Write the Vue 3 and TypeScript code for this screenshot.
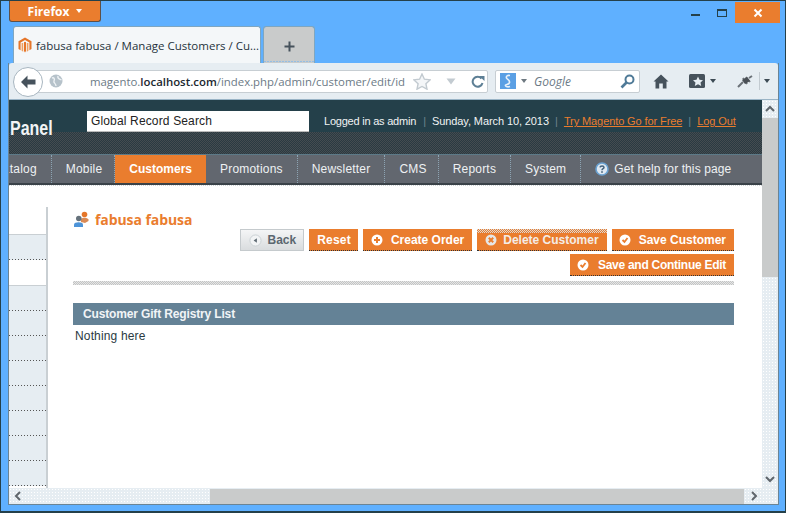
<script setup lang="ts">
const menu = [
  { label: 'Catalog', cls: 'first' },
  { label: 'Mobile', cls: 'tight' },
  { label: 'Customers', cls: 'active' },
  { label: 'Promotions', cls: '' },
  { label: 'Newsletter', cls: '' },
  { label: 'CMS', cls: 'cms' },
  { label: 'Reports', cls: '' },
  { label: 'System', cls: '' },
]
const sideRows = [1, 2, 3, 4, 5, 6, 7, 8]
</script>

<template>
  <div class="window">
    <div class="titlebar">
      <button class="ff-btn">Firefox<i class="ff-caret"></i></button>
      <div class="controls">
        <span class="min"></span>
        <span class="max"></span>
        <span class="close">
          <svg width="10" height="10" viewBox="0 0 10 10"><path d="M1.5 1.5L8.5 8.5M8.5 1.5L1.5 8.5" stroke="#fff" stroke-width="2" /></svg>
        </span>
      </div>
    </div>
    <div class="tabs">
      <div class="tab">
        <svg class="tab-icon" width="14" height="16" viewBox="0 0 14 16"><path d="M7 0.5L13.5 4.2V12L11.4 13.2V5.4L7 2.9L2.6 5.4V13.2L0.5 12V4.2Z" fill="#e5762a" /><path d="M6 5.2L7 4.7L8 5.2V14L7 15.5L6 14Z" fill="#e5762a" /><path d="M3.6 6V13.8L5.2 14.8V6ZM8.8 6V14.8L10.4 13.8V6Z" fill="#f0a060" /></svg>
        <span>fabusa fabusa / Manage Customers / Cu...</span>
      </div>
      <div class="tab-new">
        <svg width="11" height="11" viewBox="0 0 11 11"><path d="M5.5 0.5V10.5M0.5 5.5H10.5" stroke="#46525c" stroke-width="2" /></svg>
      </div>
    </div>
    <div class="frame">
      <div class="nav">
        <div class="back">
          <svg width="16" height="14" viewBox="0 0 16 14"><path d="M7.5 0.5L1 7L7.5 13.5V9.5H15.5V4.5H7.5Z" fill="#46525c" /></svg>
        </div>
        <div class="urlbar">
          <svg class="globe" width="14" height="14" viewBox="0 0 14 14"><circle cx="7" cy="7" r="6.5" fill="#b6c2ca" /><path d="M3 4C5 3 6 5 5 7S7 9 7 12M9 2C8 5 11 5 12.5 6" stroke="#eef2f5" stroke-width="1.4" fill="none" /></svg>
          <span class="url">magento.<b>localhost.com</b>/index.php/admin/customer/edit/id</span>
          <svg class="star" width="18" height="17" viewBox="0 0 18 17"><path d="M9 1L11.4 6.2L17 6.9L12.9 10.7L14 16.2L9 13.5L4 16.2L5.1 10.7L1 6.9L6.6 6.2Z" fill="#f4f6f8" stroke="#c2cad0" stroke-width="1.4" /></svg>
          <svg class="drop" width="10" height="7" viewBox="0 0 10 7"><path d="M0.5 0.5H9.5L5 6.5Z" fill="#c3cbd1" /></svg>
          <svg class="reload" width="14" height="13" viewBox="0 0 14 13"><path d="M10.5 3.5A5 5 0 1 0 11.5 8" stroke="#5d7f95" stroke-width="2" fill="none" /><path d="M8 1H13.5V6Z" fill="#5d7f95" /></svg>
        </div>
        <div class="searchbar">
          <span class="g-box"><svg width="16" height="16" viewBox="0 0 16 16"><path d="M10 2.5C7 2 6 3.5 6.5 5S10 7 9.5 9.5 6 11 5.5 12 7 14.5 10 13.5" stroke="#e8f1fa" stroke-width="1.6" fill="none" /></svg></span>
          <i class="g-caret"></i>
          <span class="g-text">Google</span>
          <svg width="15" height="15" viewBox="0 0 15 15"><circle cx="9.5" cy="5.5" r="4" fill="none" stroke="#4f7a97" stroke-width="2" /><path d="M6.5 8.5L1.5 13.5" stroke="#4f7a97" stroke-width="2.6" /></svg>
        </div>
        <svg class="home" width="16" height="15" viewBox="0 0 16 15"><path d="M8 0.5L15.5 7.5H13.5V14.5H9.8V9.5H6.2V14.5H2.5V7.5H0.5Z" fill="#46525c" /></svg>
        <div class="bookmark">
          <svg width="16" height="14" viewBox="0 0 16 14"><rect width="16" height="14" rx="1.5" fill="#46525c" /><path d="M9 2.5L10.5 5.8L14 6.2L11.5 8.6L12.2 12L9 10.3L5.8 12L6.5 8.6L4 6.2L7.5 5.8Z" fill="#e6edf2" /></svg>
          <i class="tool-caret"></i>
        </div>
        <svg class="plug" width="16" height="13" viewBox="0 0 16 13"><path d="M1 12L6 7M6 3L10 9M9 2L13 7M12 3L15 1" stroke="#6b7278" stroke-width="2" fill="none" /><path d="M5 5L10 2L13 6L8 9Z" fill="#4a5056" /></svg>
        <span class="tool-sep"></span>
        <i class="tool-caret"></i>
      </div>

      <div class="viewport">
        <div class="page">
          <header class="top">
            <div class="logo"><span>Panel</span></div>
            <div class="global-search">Global Record Search</div>
            <div class="links">
              <span class="who">Logged in as admin</span><i>|</i>
              <span>Sunday, March 10, 2013</span><i>|</i>
              <a>Try Magento Go for Free</a><i>|</i>
              <a>Log Out</a>
            </div>
          </header>
          <nav class="menu">
            <div v-for="item in menu" :key="item.label" class="menu-item" :class="item.cls">{{ item.label }}</div>
            <div class="menu-help">
              <svg width="14" height="14" viewBox="0 0 14 14"><circle cx="7" cy="7" r="6" fill="#dfe9f2" stroke="#6aa2d2" stroke-width="1.6" /><path d="M5 5.4C5.2 3.6 9 3.6 9 5.4C9 6.8 7 6.6 7 8.2" stroke="#44627c" stroke-width="1.5" fill="none" /><rect x="6.2" y="9.2" width="1.6" height="1.6" fill="#44627c" /></svg>
              <span>Get help for this page</span>
            </div>
          </nav>
          <div class="content">
            <aside class="side">
              <div class="side-white"></div>
              <div class="side-row"></div>
              <div class="side-gap"></div>
              <div v-for="n in sideRows" :key="n" class="side-row"></div>
            </aside>
            <main class="main">
              <h3 class="title">
                <svg width="17" height="17" viewBox="0 0 17 17"><circle cx="11.5" cy="3.5" r="2.8" fill="#e5762a" /><path d="M8 11V8.500C8 6.500 14 6 15.500 8.500V10L12 12Z" fill="#d98a55" /><circle cx="5.800" cy="7.500" r="2.800" fill="#66727c" /><path d="M1 16V13.500C1 10.500 10 10.500 10 13.500V16Z" fill="#4d94d8" /></svg>
                <span>fabusa fabusa</span>
              </h3>
              <div class="actions">
                <button class="btn back-btn">
                  <svg width="13" height="13" viewBox="0 0 14 14"><circle cx="7" cy="7" r="6" fill="#f2f4f5" stroke="#c9cfd3" /><path d="M8.500 4.500V9.500L5 7Z" fill="#5f6b74" /></svg>
                  Back
                </button>
                <button class="btn plain">Reset</button>
                <button class="btn">
                  <svg width="12" height="12" viewBox="0 0 12 12"><circle cx="6" cy="6" r="5.500" fill="#fff" /><path d="M6 3V9M3 6H9" stroke="#ea7d2e" stroke-width="2" /></svg>
                  Create Order
                </button>
                <button class="btn delete">
                  <svg width="12" height="12" viewBox="0 0 12 12"><circle cx="6" cy="6" r="5.500" fill="#e6e6e6" /><path d="M3.800 3.800L8.200 8.200M8.200 3.800L3.800 8.200" stroke="#ea7d2e" stroke-width="2" /></svg>
                  Delete Customer
                </button>
                <button class="btn save">
                  <svg width="12" height="12" viewBox="0 0 12 12"><circle cx="6" cy="6" r="5.500" fill="#fff" /><path d="M3.500 6L5.500 8L8.500 4" stroke="#ea7d2e" stroke-width="1.800" fill="none" /></svg>
                  Save Customer
                </button>
                <button class="btn save tight-text">
                  <svg width="12" height="12" viewBox="0 0 12 12"><circle cx="6" cy="6" r="5.500" fill="#fff" /><path d="M3.500 6L5.500 8L8.500 4" stroke="#ea7d2e" stroke-width="1.800" fill="none" /></svg>
                  Save and Continue Edit
                </button>
              </div>
              <div class="divider"></div>
              <div class="section-head">Customer Gift Registry List</div>
              <p class="empty">Nothing here</p>
            </main>
          </div>
        </div>
        <div class="vscroll">
          <svg width="10" height="7" viewBox="0 0 10 7"><path d="M1 6L5 2L9 6" stroke="#5f666c" stroke-width="2" fill="none" /></svg>
          <div class="vthumb"></div>
          <svg class="v-down" width="10" height="7" viewBox="0 0 10 7"><path d="M1 1L5 5L9 1" stroke="#5f666c" stroke-width="2" fill="none" /></svg>
        </div>
      </div>
      <div class="hscroll">
        <svg width="7" height="10" viewBox="0 0 7 10"><path d="M6 1L2 5L6 9" stroke="#5f666c" stroke-width="2" fill="none" /></svg>
        <div class="hthumb"></div>
        <svg width="7" height="10" viewBox="0 0 7 10"><path d="M1 1L5 5L1 9" stroke="#5f666c" stroke-width="2" fill="none" /></svg>
      </div>
    </div>
  </div>
</template>

<style>
html,
body {
  margin: 0;
  overflow: hidden;
}
</style>

<style scoped>
.window {
  box-sizing: border-box;
  width: 786px;
  height: 513px;
  border: 1px solid #24404a;
  border-bottom-width: 2px;
  background: #5fb0ff;
  padding: 0 6px 6px 7px;
  display: flex;
  flex-direction: column;
  font-family: 'Liberation Sans', Arial, sans-serif;
  overflow: hidden;
}
.titlebar {
  height: 25px;
  display: flex;
  justify-content: space-between;
  flex: none;
}
.ff-btn {
  all: unset;
  box-sizing: border-box;
  width: 92px;
  height: 21px;
  margin-left: 1px;
  background: #ea7d2e;
  border: 1px solid #5d5048;
  border-top: 0;
  border-radius: 0 0 3px 3px;
  color: #fff;
  font: bold 12px 'Open Sans', sans-serif;
  display: flex;
  align-items: center;
  justify-content: center;
  gap: 7px;
}
.ff-caret {
  width: 0;
  height: 0;
  border: 3px solid transparent;
  border-top: 4px solid #fff;
  border-bottom: 0;
}
.controls {
  display: flex;
  align-items: flex-start;
}
.min {
  width: 9px;
  height: 2px;
  background: #24404a;
  margin: 13px 17px 0 0;
}
.max {
  box-sizing: border-box;
  width: 10px;
  height: 8px;
  border: 1px solid #24404a;
  border-top-width: 2px;
  margin: 8px 8px 0 0;
}
.close {
  width: 45px;
  height: 21px;
  margin: 1px -1px 0 0;
  background-color: #ea7d2e;
  background-image: radial-gradient(#c9651f 0.6px, transparent 0.7px);
  background-size: 2px 2px;
  display: flex;
  align-items: center;
  justify-content: center;
}
.tabs {
  display: flex;
  height: 37px;
  flex: none;
  margin-left: 5px;
  gap: 2px;
}
.tab {
  box-sizing: border-box;
  width: 248px;
  background: #f4f7f9;
  border: 1px solid #7fa6c0;
  border-bottom: 0;
  border-radius: 3px 3px 0 0;
  display: flex;
  align-items: center;
  gap: 4px;
  padding: 0 0 0 4px;
  font: 11.5px 'Open Sans', sans-serif;
  color: #26333c;
  white-space: nowrap;
  overflow: hidden;
}
.tab-icon {
  flex: none;
}
.tab-new {
  box-sizing: border-box;
  width: 52px;
  background-color: #c9cbcb;
  background-image: radial-gradient(#5fb0ff 0.8px, transparent 0.9px);
  background-size: 3px 3px;
  background-position: bottom;
  background-repeat: repeat-x;
  background-clip: padding-box;
  border: 1px solid #7fa6c0;
  border-bottom: 0;
  border-radius: 3px 3px 0 0;
  display: flex;
  align-items: center;
  justify-content: center;
  padding-top: 3px;
}
.frame {
  flex: 1;
  min-height: 0;
  display: flex;
  flex-direction: column;
  border: 1px solid #6b8494;
  border-top: 0;
  width: 771px;
  box-sizing: border-box;
}
.nav {
  height: 37px;
  flex: none;
  background: #e6edf2;
  display: flex;
  align-items: center;
  position: relative;
  padding: 0 0 0 21px;
  border-bottom: 1px solid #9ab4c6;
  box-sizing: border-box;
  border-radius: 3px 3px 0 0;
}
.back {
  position: absolute;
  left: 4px;
  top: 4px;
  box-sizing: border-box;
  width: 30px;
  height: 30px;
  border-radius: 50%;
  background: #fff;
  border: 1px solid #a8b6c0;
  display: flex;
  align-items: center;
  justify-content: center;
  z-index: 1;
}
.urlbar {
  box-sizing: border-box;
  width: 458px;
  height: 23px;
  background: #fff;
  border: 1px solid #c7ced3;
  border-radius: 2px;
  display: flex;
  align-items: center;
  padding-left: 18px;
  font: 11.4px 'Open Sans', sans-serif;
  color: #6c7a86;
  white-space: nowrap;
}
.globe {
  flex: none;
}
.url {
  margin-left: 27px;
  width: 317px;
  overflow: hidden;
  flex: none;
}
.url b {
  font-weight: 600;
  color: #1c2830;
}
.star {
  flex: none;
  margin-left: 6px;
}
.drop {
  flex: none;
  margin-left: 15px;
}
.reload {
  flex: none;
  margin-left: 15px;
}
.searchbar {
  box-sizing: border-box;
  width: 145px;
  height: 23px;
  margin-left: 7px;
  background: #fff;
  border: 1px solid #c7ced3;
  border-radius: 2px;
  display: flex;
  align-items: center;
  padding: 0 4px;
}
.g-box {
  width: 16px;
  height: 16px;
  background: #5a9fe4;
  display: block;
  flex: none;
}
.g-caret {
  width: 0;
  height: 0;
  border: 3px solid transparent;
  border-top: 4px solid #6d7880;
  border-bottom: 0;
  margin-left: 5px;
}
.g-text {
  flex: 1;
  margin-left: 7px;
  font: italic 12px 'Open Sans', sans-serif;
  color: #6c7a86;
}
.home {
  margin-left: 13px;
  flex: none;
}
.bookmark {
  margin-left: 20px;
  display: flex;
  align-items: center;
  gap: 5px;
}
.tool-caret {
  width: 0;
  height: 0;
  border: 3.500px solid transparent;
  border-top: 4px solid #3c4a54;
  border-bottom: 0;
}
.plug {
  margin-left: 21px;
  flex: none;
}
.tool-sep {
  width: 1px;
  height: 18px;
  background: #c3cbd1;
  margin: 0 4px 0 6px;
}
.viewport {
  flex: 1;
  min-height: 0;
  display: flex;
}
.page {
  width: 753px;
  flex: none;
  background: #fff;
  overflow: hidden;
  display: flex;
  flex-direction: column;
}
.top {
  height: 55px;
  flex: none;
  background-color: #24404a;
  background-image:
    linear-gradient(#24404a 0, #24404a 32px, transparent 32px),
    repeating-conic-gradient(#454c50 0 25%, #2a3a42 0 50%);
  background-size: auto, 2px 2px;
  display: flex;
  align-items: flex-start;
  box-sizing: border-box;
  border-bottom: 1px solid #5d7a88;
}
.logo {
  width: 78px;
  flex: none;
  padding: 17px 0 0 1px;
  box-sizing: border-box;
  font: bold 20px 'Liberation Sans', sans-serif;
  color: #f2f4f5;
}
.logo span {
  display: inline-block;
  transform: scaleX(0.8);
  transform-origin: left;
}
.global-search {
  box-sizing: border-box;
  width: 222px;
  height: 21px;
  margin-top: 11px;
  background: #fff;
  border-bottom: 1px solid #bbb;
  padding: 3px 0 0 4px;
  font-size: 12px;
  letter-spacing: 0.15px;
  color: #222;
  flex: none;
}
.links {
  margin: 15px 0 0 15px;
  display: flex;
  font-size: 11px;
  letter-spacing: -0.1px;
  color: #f0f3f4;
  white-space: nowrap;
}
.links .who {
  letter-spacing: -0.22px;
  margin-right: 1px;
}
.links i {
  font-style: normal;
  color: #71858e;
  width: 15px;
  text-align: center;
}
.links a {
  color: #ea7d2e;
  text-decoration: underline;
}
.menu {
  height: 30px;
  flex: none;
  background: #62676f;
  border-bottom: 2px solid #3a4248;
  box-sizing: border-box;
  display: flex;
  color: #eef1f3;
  font-size: 12px;
  letter-spacing: 0.2px;
  white-space: nowrap;
}
.menu-item {
  padding: 0 14px;
  line-height: 28px;
  border-right: 1px dotted #8da4b3;
}
.menu-item.first {
  margin-left: -29px;
}
.menu-item.tight {
  padding: 0 12px 0 14px;
}
.menu-item.cms {
  padding: 0 11px 0 14px;
}
.menu-item.active {
  background: #ea7d2e;
  color: #fff;
  font-weight: bold;
  letter-spacing: 0;
  border-right: 0;
  padding: 0 14px;
}
.menu-help {
  display: flex;
  align-items: center;
  gap: 5px;
  padding-left: 14px;
  letter-spacing: 0.1px;
}
.content {
  flex: 1;
  min-height: 0;
  display: flex;
  padding-top: 21px;
  border-top: 1px dotted #cfd3d5;
}
.side {
  width: 39px;
  flex: none;
  box-sizing: border-box;
  border-right: 2px solid #c9cfd3;
}
.side-white {
  height: 28px;
  box-sizing: border-box;
  border-bottom: 1px solid #c9cfd3;
}
.side-row {
  height: 25px;
  box-sizing: border-box;
  background-color: #e6edf2;
  background-image: linear-gradient(90deg, #555 1px, transparent 1px);
  background-size: 3px 1px;
  background-position: left bottom;
  background-repeat: repeat-x;
}
.side-gap {
  height: 26px;
  box-sizing: border-box;
  background: #fff;
  border-bottom: 1px solid #c9cfd3;
}
.main {
  flex: 1;
  padding: 4px 28px 0 25px;
  min-width: 0;
}
.title {
  margin: 0;
  height: 16px;
  display: flex;
  align-items: center;
  gap: 5px;
  font: bold 14px 'Open Sans', sans-serif;
  letter-spacing: -0.08px;
  color: #ea7d2e;
}
.actions {
  display: flex;
  flex-wrap: wrap;
  justify-content: flex-end;
  gap: 3px 5px;
  margin-top: 2px;
}
.btn {
  all: unset;
  box-sizing: border-box;
  height: 22px;
  display: flex;
  align-items: center;
  gap: 8px;
  padding: 0 8px;
  background: #ea7d2e;
  border-bottom: 1px dotted #333;
  color: #fff;
  font: bold 12px 'Liberation Sans', sans-serif;
  white-space: nowrap;
}
.btn.plain {
  letter-spacing: 0.2px;
  padding: 0 7px 0 8px;
}
.btn.back-btn {
  background: linear-gradient(#f4f5f6, #d9dcde);
  border: 1px solid #c5cacd;
  color: #5b6770;
  gap: 6px;
  padding: 0 7px 0 8px;
}
.btn.delete {
  gap: 6px;
  padding: 0 8px;
  color: #f4ece6;
  background-color: #ea7d2e;
  background-image:
    linear-gradient(transparent 4px, #ea7d2e 4px),
    repeating-conic-gradient(#ea7d2e 0 25%, #d9d9d9 0 50%);
  background-size: auto, 2px 2px;
}
.btn.save {
  gap: 8px;
  padding: 0 8px 0 7px;
}
.btn.tight-text {
  letter-spacing: -0.27px;
  gap: 9px;
  padding: 0 8px 0 7px;
}
.divider {
  height: 4px;
  margin-top: 5px;
  background-image: repeating-conic-gradient(#c2c4c4 0 25%, #e6e6e6 0 50%);
  background-size: 2px 2px;
}
.section-head {
  height: 22px;
  margin-top: 18px;
  padding-left: 10px;
  line-height: 22px;
  background: #648296;
  color: #f1f4f6;
  font-size: 12px;
  letter-spacing: -0.15px;
  font-weight: bold;
}
.empty {
  margin: 4px 0 0 2px;
  font-size: 12px;
  letter-spacing: 0.15px;
  color: #2b3a42;
}
.vscroll {
  flex: 1;
  background-color: #e6edf2;
  background-image: radial-gradient(#fff 0.6px, transparent 0.7px);
  background-size: 3px 3px;
  display: flex;
  flex-direction: column;
  align-items: center;
  padding-top: 5px;
  box-sizing: border-box;
}
.vthumb {
  width: 100%;
  height: 159px;
  margin-top: 6px;
  background-color: #c9cbcb;
  background-image: radial-gradient(#e2e5e6 0.5px, transparent 0.6px);
  background-size: 6px 6px;
}
.v-down {
  margin-top: auto;
  margin-bottom: 5px;
}
.hscroll {
  height: 16px;
  flex: none;
  background-color: #e6edf2;
  background-image: radial-gradient(#fff 0.6px, transparent 0.7px);
  background-size: 3px 3px;
  display: flex;
  align-items: center;
  padding-left: 5px;
}
.hthumb {
  width: 534px;
  height: 15px;
  margin: 0 7px 0 189px;
  background-color: #c9cbcb;
  background-image: radial-gradient(#e2e5e6 0.5px, transparent 0.6px);
  background-size: 6px 6px;
}
</style>
